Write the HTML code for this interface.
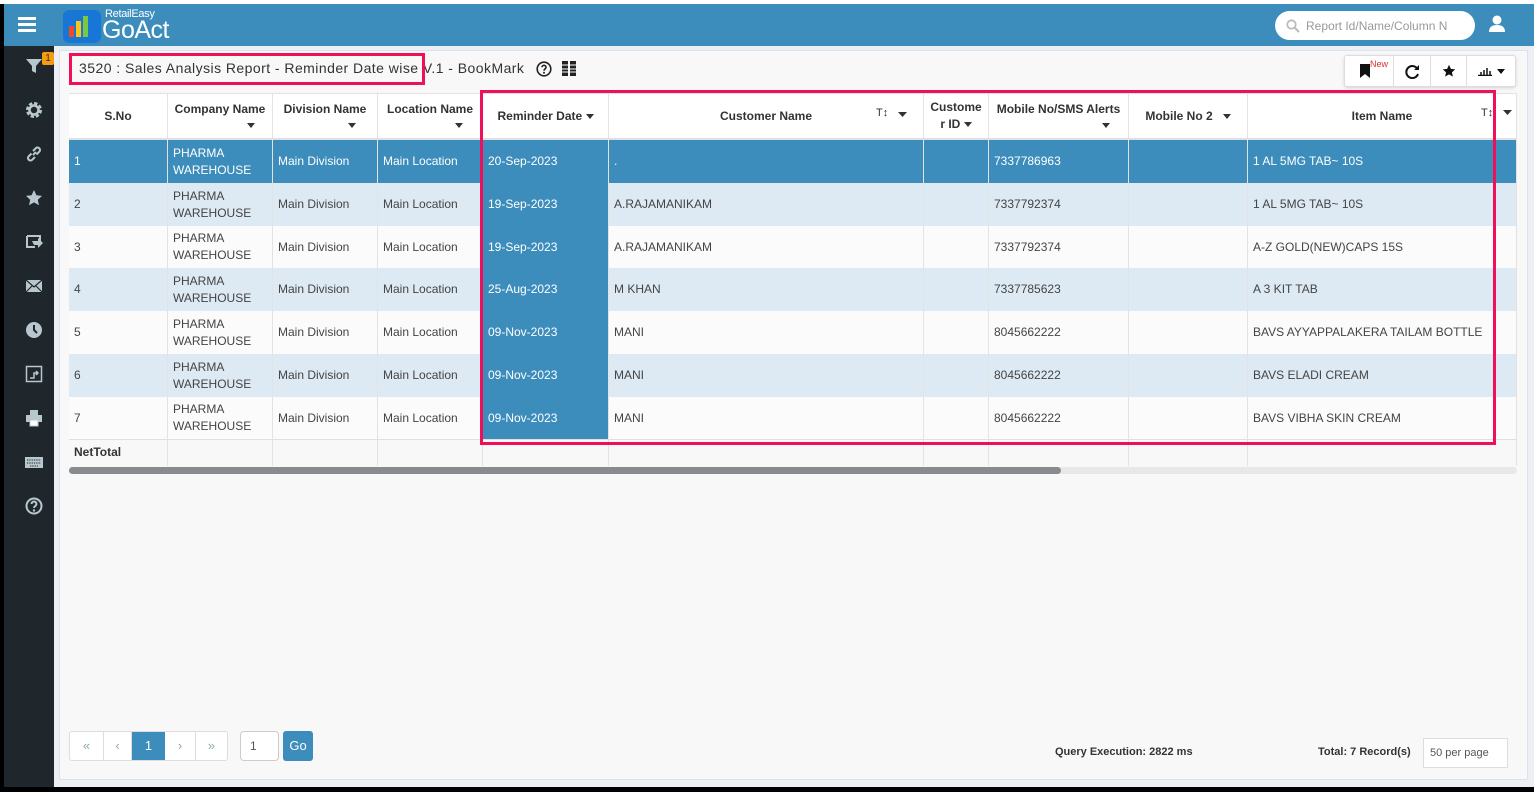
<!DOCTYPE html>
<html><head><meta charset="utf-8"><style>
*{box-sizing:border-box;margin:0;padding:0}
body{width:1534px;height:792px;overflow:hidden;background:#000;font-family:"Liberation Sans","DejaVu Sans",sans-serif;position:relative}
.a{position:absolute}
#top{left:0;top:0;width:1534px;height:4px;background:#fff}
#hdr{left:4px;top:4px;width:1530px;height:42px;background:#3c8dbc}
#side{left:4px;top:46px;width:50px;height:741px;background:#1f272d}
#main{left:54px;top:46px;width:1480px;height:741px;background:#ecf0f5}
#panel{left:59px;top:50px;width:1469px;height:730px;background:#f8f8f8;border:1px solid #dde2e8;border-radius:2px}
.ic{position:absolute;left:21px;width:18px;height:18px}
.cell{position:absolute;font-size:12px;color:#444;line-height:17px;padding-left:5px;display:flex;align-items:center;border-right:1px solid #e3e3e3;overflow:hidden;white-space:nowrap}
.hd{font-weight:bold;color:#333;font-size:12px;justify-content:center;text-align:center;line-height:17px;padding:0 2px}
.caret{display:inline-block;width:0;height:0;border-left:4.5px solid transparent;border-right:4.5px solid transparent;border-top:5px solid #333;vertical-align:middle}
.btn{position:absolute;top:0;height:30px;border-right:1px solid #ddd;display:flex;align-items:center;justify-content:center}
</style></head><body>
<div class="a" id="top"></div>
<div class="a" id="hdr">
 <div class="a" style="left:14px;top:13px;width:18px;height:3px;background:#fff;box-shadow:0 6px 0 #fff,0 12px 0 #fff"></div>
 <div class="a" style="left:59px;top:6px;width:38px;height:33px;background:#1877d6;border-radius:6px">
  <div class="a" style="left:6px;top:16px;width:5px;height:11px;background:#f04b23"></div>
  <div class="a" style="left:13px;top:11px;width:5px;height:16px;background:#f8c61c"></div>
  <div class="a" style="left:20px;top:6px;width:5px;height:21px;background:#7ac943"></div>
 </div>
 <div class="a" style="left:101px;top:4px;color:#fff;font-size:11px;letter-spacing:-0.3px">RetailEasy</div>
 <div class="a" style="left:98px;top:12px;color:#fff;font-size:25px;letter-spacing:-0.5px">GoAct</div>
 <div class="a" style="left:1271px;top:7px;width:200px;height:29px;background:#fff;border-radius:15px;color:#999;font-size:12px;padding:8px 0 0 31px">Report Id/Name/Column N
  <svg class="a" style="left:11px;top:8px" width="14" height="14" viewBox="0 0 14 14"><circle cx="5.5" cy="5.5" r="4.2" fill="none" stroke="#bbb" stroke-width="1.8"/><path d="M8.5 8.5L13 13" stroke="#bbb" stroke-width="2"/></svg></div>
 <svg class="a" style="left:1485px;top:11px" width="16" height="18" viewBox="0 0 16 18"><circle cx="8" cy="5" r="4.5" fill="#fff"/><path d="M0 17c0-5 3-7 8-7s8 2 8 7z" fill="#fff"/></svg>
</div>
<div class="a" id="side">
 <svg class="ic" style="top:11px" viewBox="0 0 18 18"><path d="M1 2h16l-6 7v7l-4-2V9z" fill="#b8c7ce"/></svg>
 <div class="a" style="left:38px;top:6px;width:12px;height:13px;background:#f39c12;border-radius:2px;font-size:10px;color:#333;text-align:center;line-height:13px">1</div>
 <svg class="ic" style="top:55px" viewBox="0 0 18 18"><circle cx="9" cy="9" r="6" fill="none" stroke="#b8c7ce" stroke-width="4" stroke-dasharray="3 1.7"/><circle cx="9" cy="9" r="4.5" fill="none" stroke="#b8c7ce" stroke-width="2.5"/></svg>
 <svg class="ic" style="top:99px" viewBox="0 0 18 18"><path d="M8 10l3-3M6.5 8.5l-3 3a2.5 2.5 0 003.5 3.5l3-3M11.5 9.5l3-3a2.5 2.5 0 00-3.5-3.5l-3 3" stroke="#b8c7ce" stroke-width="2" fill="none"/></svg>
 <svg class="ic" style="top:143px" viewBox="0 0 18 18"><path d="M9 1l2.4 5.3 5.6.6-4.2 3.8 1.2 5.6L9 13.4 4 16.3l1.2-5.6L1 6.9l5.6-.6z" fill="#b8c7ce"/></svg>
 <svg class="ic" style="top:187px" viewBox="0 0 18 18"><path d="M2 3h13v5M2 3v11h8" stroke="#b8c7ce" stroke-width="2" fill="none"/><path d="M7 8l6 0v-3l5 5-5 5v-3H9z" fill="#b8c7ce"/></svg>
 <svg class="ic" style="top:231px" viewBox="0 0 18 18"><rect x="1" y="3" width="16" height="12" fill="#b8c7ce"/><path d="M1 3l8 7 8-7M1 15l6-6M17 15l-6-6" stroke="#1f272d" stroke-width="1.2" fill="none"/></svg>
 <svg class="ic" style="top:275px" viewBox="0 0 18 18"><circle cx="9" cy="9" r="8" fill="#b8c7ce"/><path d="M9 4v5l3 3" stroke="#1f272d" stroke-width="2" fill="none"/></svg>
 <svg class="ic" style="top:319px" viewBox="0 0 18 18"><rect x="1.5" y="1.5" width="15" height="15" fill="none" stroke="#b8c7ce" stroke-width="1.5"/><path d="M5 13h4v-5h4M11 6l2 2-2 2" stroke="#b8c7ce" stroke-width="1.5" fill="none"/></svg>
 <svg class="ic" style="top:363px" viewBox="0 0 18 18"><rect x="5" y="1" width="8" height="5" fill="#b8c7ce"/><rect x="1" y="6" width="16" height="7" fill="#b8c7ce"/><rect x="5" y="11" width="8" height="6" fill="#fff" stroke="#b8c7ce"/></svg>
 <svg class="ic" style="top:407px" viewBox="0 0 18 18"><rect x="0" y="4" width="18" height="11" fill="#b8c7ce"/><path d="M2 7h14M2 10h14M5 13h8" stroke="#1f272d" stroke-width="1" stroke-dasharray="1.3 1"/></svg>
 <svg class="ic" style="top:451px" viewBox="0 0 18 18"><circle cx="9" cy="9" r="7.5" fill="none" stroke="#b8c7ce" stroke-width="2"/><path d="M6.5 7a2.5 2.5 0 115 0c0 2-2.5 2-2.5 4" stroke="#b8c7ce" stroke-width="2" fill="none"/><circle cx="9" cy="13.5" r="1.2" fill="#b8c7ce"/></svg>
</div>
<div class="a" id="main"></div>
<div class="a" id="panel"></div>

<div class="a" style="left:79px;top:60px;font-size:14px;color:#333;white-space:nowrap;letter-spacing:0.45px">3520 : Sales Analysis Report - Reminder Date wise V.1 - BookMark</div>
<svg class="a" style="left:536px;top:61px" width="16" height="16" viewBox="0 0 16 16"><circle cx="8" cy="8" r="6.8" fill="none" stroke="#222" stroke-width="1.6"/><path d="M6 6.3a2 2 0 114 0c0 1.7-2 1.7-2 3.4" stroke="#222" stroke-width="1.6" fill="none"/><circle cx="8" cy="11.8" r="1" fill="#222"/></svg>
<svg class="a" style="left:562px;top:61px" width="14" height="15" viewBox="0 0 14 15"><rect x="0" y="0" width="6" height="15" fill="#222"/><rect x="8" y="0" width="6" height="15" fill="#222"/><path d="M0 4h14M0 8h14M0 11h14" stroke="#fff" stroke-width="1"/></svg>
<div class="a" style="left:69px;top:53px;width:356px;height:32px;border:3px solid #f0105a"></div>

<div class="a" style="left:1344px;top:55px;width:172px;height:32px;background:#fff;border:1px solid #ddd;border-radius:3px;box-shadow:0 1px 3px rgba(0,0,0,.15)">
 <div class="btn" style="left:0;width:49px"><svg width="10" height="14" viewBox="0 0 10 14" style="margin-right:8px"><path d="M0 0h10v14L5 10 0 14z" fill="#111"/></svg><span class="a" style="left:25px;top:3px;color:#e03030;font-size:9px">New</span></div>
 <div class="btn" style="left:49px;width:37px"><svg width="15" height="15" viewBox="0 0 15 15"><path d="M12.5 5A6 6 0 1013 10" stroke="#111" stroke-width="2" fill="none"/><path d="M14 1v5H9z" fill="#111"/></svg></div>
 <div class="btn" style="left:86px;width:36px"><svg width="14" height="14" viewBox="0 0 18 18"><path d="M9 1l2.4 5.3 5.6.6-4.2 3.8 1.2 5.6L9 13.4 4 16.3l1.2-5.6L1 6.9l5.6-.6z" fill="#111"/></svg></div>
 <div class="btn" style="left:122px;width:49px;border:none"><svg width="14" height="10" viewBox="0 0 14 10"><path d="M0 9.5h14M3 9V6M6 9V4M9 9V2M12 9V5" stroke="#111" stroke-width="1.5"/></svg>&nbsp;<span class="caret" style="border-top-color:#111"></span></div>
</div>

<div class="a" style="left:69px;top:93px;width:1448px;height:47px;background:#fff;border-top:1px solid #e3e3e3;border-bottom:2px solid #e0e0e0"></div>
<div id="grid"></div>
<div class="a" style="left:69px;top:439px;width:1448px;height:1px;background:#e0e0e0"></div>
<div class="a" style="left:69px;top:467px;width:1448px;height:7px;background:#e8e8e8;border-radius:4px"></div>
<div class="a" style="left:69px;top:467px;width:992px;height:7px;background:#878b8f;border-radius:4px"></div>
<svg class="a" style="left:1503px;top:110px" width="9" height="6"><path d="M0 0h9L4.5 5z" fill="#333"/></svg>

<div class="a" style="left:480px;top:90px;width:1016px;height:355px;border:3px solid #f0105a"></div>

<div class="a" style="left:69px;top:731px;width:159px;height:30px;border:1px solid #ddd;border-radius:3px;background:#fff;display:flex;font-size:13px;color:#3c8dbc">
 <div style="flex:none;width:34px;text-align:center;line-height:28px;border-right:1px solid #ddd;color:#8aa">«</div>
 <div style="flex:none;width:28px;text-align:center;line-height:28px;border-right:1px solid #ddd;color:#8aa">‹</div>
 <div style="flex:none;width:33px;text-align:center;line-height:28px;background:#3c8dbc;color:#fff">1</div>
 <div style="flex:none;width:31px;text-align:center;line-height:28px;border-right:1px solid #ddd;color:#8aa">›</div>
 <div style="flex:none;width:31px;text-align:center;line-height:28px;color:#8aa">»</div>
</div>
<div class="a" style="left:240px;top:731px;width:39px;height:30px;border:1px solid #ccc;border-radius:4px;background:#fff;font-size:12px;color:#555;padding:7px 0 0 9px">1</div>
<div class="a" style="left:283px;top:731px;width:30px;height:30px;background:#3c8dbc;border-radius:3px;color:#fff;font-size:13px;text-align:center;line-height:30px">Go</div>
<div class="a" style="left:1055px;top:746px;font-size:11px;font-weight:bold;color:#333">Query Execution: 2822 ms</div>
<div class="a" style="left:1318px;top:746px;font-size:11px;font-weight:bold;color:#333">Total: 7 Record(s)</div>
<div class="a" style="left:1423px;top:738px;width:85px;height:30px;background:#fff;border:1px solid #ddd;font-size:11px;color:#555;padding:8px 0 0 6px">50 per page</div>
<div class="a" style="left:0;top:787px;width:1534px;height:5px;background:#000"></div>

<script>
var xs=[69,168,273,378,483,609,924,989,1129,1248,1517];
var ys=[140,183,226,268,311,354,397,439,466];
var g=document.getElementById('grid'),h='';
function c(x1,x2,y1,y2,txt,cls,bg,col){h+='<div class="cell '+(cls||'')+'" style="left:'+x1+'px;top:'+y1+'px;width:'+(x2-x1)+'px;height:'+(y2-y1)+'px;'+(bg?'background:'+bg+';':'')+(col?'color:'+col+';':'')+'"><div>'+txt+'</div></div>';}
var K='<span class="caret"></span>';
var R='<div style="text-align:right;padding-right:10px;line-height:14px">'+K+'</div>';
var hdrs=['S.No','Company Name'+R,'Division Name'+R,'Location Name'+R,'Reminder Date '+K,'Customer Name','Custome<br>r ID '+K,'Mobile No/SMS Alerts'+R,'Mobile No 2 &nbsp; '+K,'Item Name'];
for(var i=0;i<10;i++)c(xs[i],xs[i+1],94,138,hdrs[i],'hd');
h+='<div class="a" style="left:876px;top:107px;font-size:11px;color:#333">T↕</div><svg class="a" style="left:898px;top:112px" width="9" height="6"><path d="M0 0h9L4.5 5z" fill="#333"/></svg>';
h+='<div class="a" style="left:1481px;top:107px;font-size:11px;color:#333">T↕</div>';
var rows=[['20-Sep-2023','.','7337786963','1 AL 5MG TAB~ 10S'],['19-Sep-2023','A.RAJAMANIKAM','7337792374','1 AL 5MG TAB~ 10S'],['19-Sep-2023','A.RAJAMANIKAM','7337792374','A-Z GOLD(NEW)CAPS 15S'],['25-Aug-2023','M KHAN','7337785623','A 3 KIT TAB'],['09-Nov-2023','MANI','8045662222','BAVS AYYAPPALAKERA TAILAM BOTTLE'],['09-Nov-2023','MANI','8045662222','BAVS ELADI CREAM'],['09-Nov-2023','MANI','8045662222','BAVS VIBHA SKIN CREAM']];
for(var r=0;r<7;r++){var y1=ys[r],y2=ys[r+1]-1,sel=r==0,bg=sel?'#3c8dbc':(r%2?'#dde9f3':'#fbfbfb'),col=sel?'#fff':'#444';
 h+='<div class="a" style="left:69px;top:'+y1+'px;width:1448px;height:'+(y2-y1+1)+'px;background:'+bg+'"></div>';
 var v=[String(r+1),'PHARMA<br>WAREHOUSE','Main Division','Main Location',rows[r][0],rows[r][1],'',rows[r][2],'',rows[r][3]];
 for(var i=0;i<10;i++){c(xs[i],xs[i+1],y1,y2+1,v[i],'',i==4?'#3c8dbc':'',i==4?'#fff':col);}
}
c(69,168,439,466,'<b style="color:#333">NetTotal</b>');
for(var i=1;i<10;i++)c(xs[i],xs[i+1],439,466,'');
g.innerHTML=h;
</script>
</body></html>
